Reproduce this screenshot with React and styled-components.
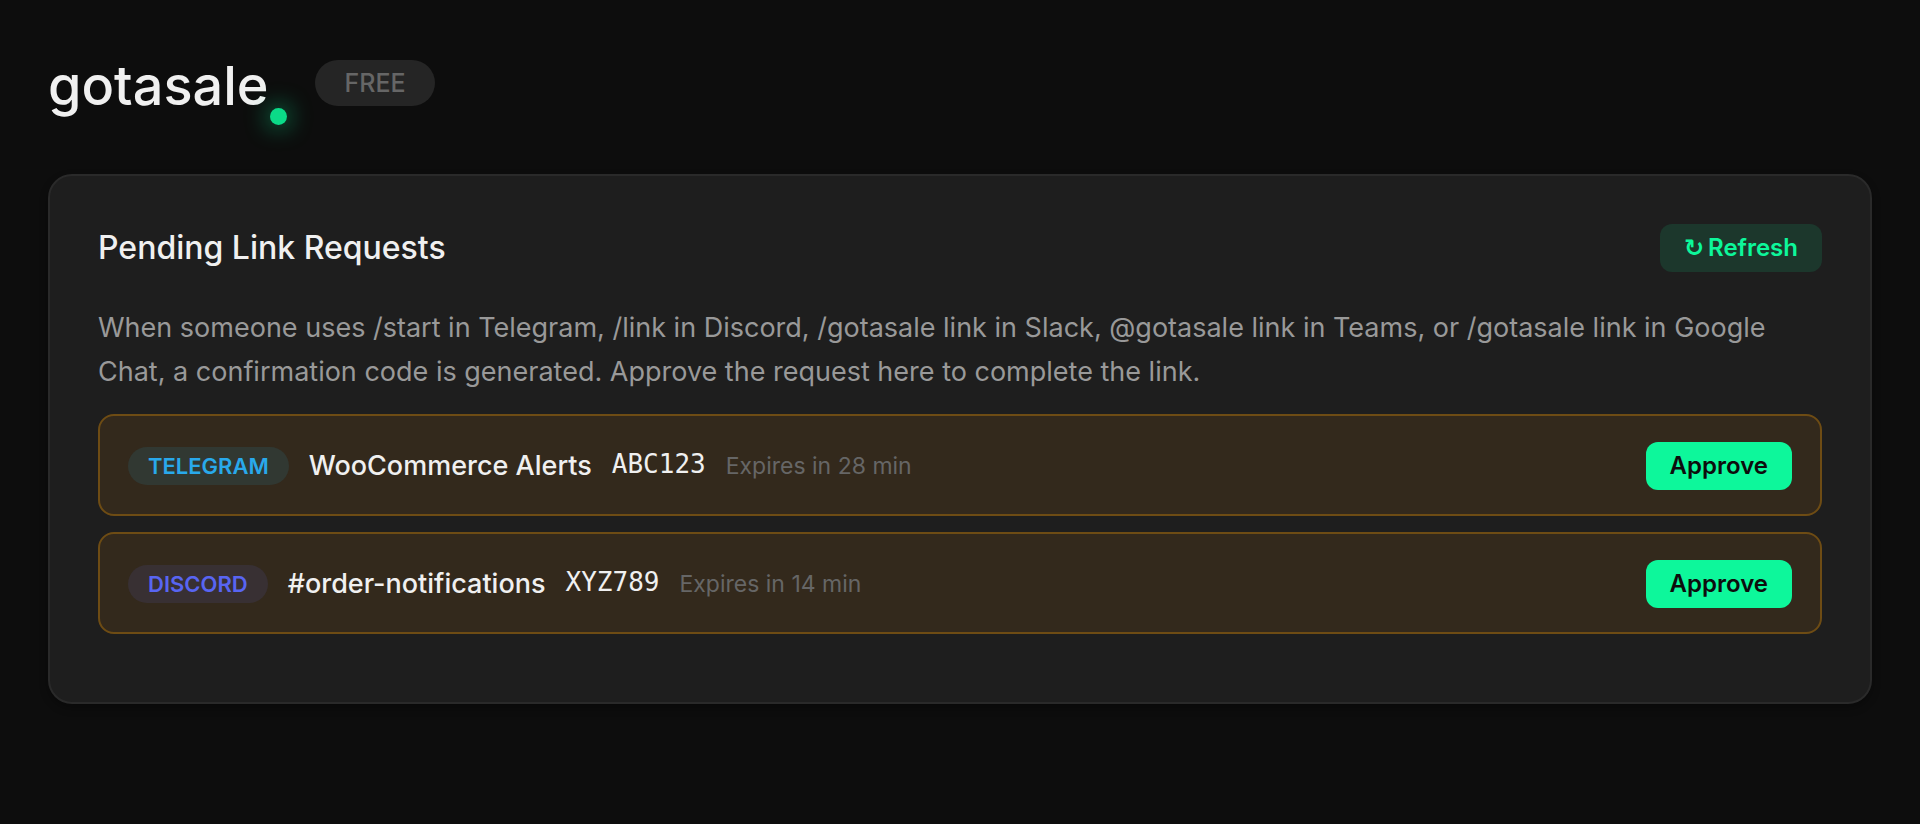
import React, { useState } from 'react';
import styled, { createGlobalStyle } from 'styled-components';

const GlobalStyle = createGlobalStyle`
  * {
    box-sizing: border-box;
  }

  body {
    margin: 0;
    background: #0d0d0d;
    color: #f0f0f0;
    font-family: Inter, 'DejaVu Sans', sans-serif;
  }
`

const Page = styled.main`
  padding: 48px;
`

const Header = styled.header`
  display: flex;
  align-items: flex-start;
  gap: 28px;

  height: 126px;
  padding-top: 4px;
`

const Logo = styled.h1`
  display: flex;
  align-items: flex-start;
  gap: 2px;

  height: 73px;
  margin: 0;

  font-size: 54px;
  line-height: 68px;
  font-weight: 500;
`

const Dot = styled.span`
  align-self: flex-end;

  width: 17px;
  height: 17px;

  border-radius: 50%;

  background: #0bda88;
  box-shadow: 0 0 24px rgba(13, 247, 155, 0.8);
`

const Plan = styled.span`
  margin-top: 8px;
  padding: 0 29px;

  border-radius: 23px;

  background: #252525;
  color: #666666;

  font-size: 25px;
  line-height: 46px;
  font-weight: 500;
`

const Card = styled.section`
  padding: 48px 48px 68px;

  border: 2px solid #2a2a2a;
  border-radius: 24px;

  background: #1e1e1e;
  box-shadow: 0 4px 8px rgba(0, 0, 0, 0.3);
`

const CardHeader = styled.div`
  display: flex;
  justify-content: space-between;
  align-items: center;

  margin-bottom: 34px;
`

const Title = styled.h2`
  margin: 0;

  font-size: 32px;
  line-height: 48px;
  font-weight: 500;
`

const Btn = styled.button`
  display: flex;
  align-items: center;
  gap: 4px;

  height: 48px;
  padding: 0 24px;

  border: 0;
  border-radius: 12px;

  background: ${props => props.$primary ? "#0df79b" : "#1c372c"};
  color: ${props => props.$primary ? "#0d0d0d" : "#0df79b"};

  font-family: inherit;
  font-size: 24px;
  line-height: 30px;
  font-weight: 600;

  cursor: pointer;
`

const Arrow = styled.span`
  font-family: 'DejaVu Sans', sans-serif;
`

const Description = styled.p`
  margin: 0 0 20px;

  color: #999999;

  font-size: 27px;
  line-height: 44px;
`

const RequestList = styled.ul`
  display: flex;
  flex-direction: column;
  gap: 16px;

  margin: 0;
  padding: 0;

  list-style: none;
`

const Request = styled.li`
  display: flex;
  align-items: center;
  gap: 20px;

  padding: 26px 28px 24px;

  border: 2px solid #6e4c14;
  border-radius: 16px;

  background: #33291c;
`

const Platform = styled.span`
  padding: 0 20px;

  border-radius: 19px;

  background: ${props => props.$background};
  color: ${props => props.$color};

  font-size: 22px;
  line-height: 38px;
  font-weight: 600;
`

const Name = styled.span`
  font-size: 27px;
  line-height: 40px;
  font-weight: 500;
`

const Code = styled.code`
  padding-bottom: 4px;

  font-family: 'DejaVu Sans Mono', monospace;
  font-size: 26px;
  line-height: 40px;
`

const Expires = styled.span`
  flex: 1;

  color: #666666;

  font-size: 23px;
  line-height: 40px;
`

const platforms = {
  telegram: { label: 'TELEGRAM', color: '#29a9eb', background: '#313832' },
  discord: { label: 'DISCORD', color: '#5865f2', background: '#383033' },
}

const pending = [
  { platform: 'telegram', name: 'WooCommerce Alerts', code: 'ABC123', minutes: 28 },
  { platform: 'discord', name: '#order-notifications', code: 'XYZ789', minutes: 14 },
]

function PendingRequest({ request, onApprove }) {
  const platform = platforms[request.platform]

  return (
    <Request>
      <Platform $color={platform.color} $background={platform.background}>{platform.label}</Platform>
      <Name>{request.name}</Name>
      <Code>{request.code}</Code>
      <Expires>Expires in {request.minutes} min</Expires>
      <Btn type="button" $primary onClick={() => onApprove(request.code)}>Approve</Btn>
    </Request>
  )
}

function App() {
  const [requests, setRequests] = useState(pending)

  const approve = (code) => setRequests(requests.filter(r => r.code !== code))

  return (
    <Page>
      <GlobalStyle />
      <Header>
        <Logo>gotasale<Dot /></Logo>
        <Plan>FREE</Plan>
      </Header>
      <Card>
        <CardHeader>
          <Title>Pending Link Requests</Title>
          <Btn type="button" onClick={() => setRequests(pending)}><Arrow>↻</Arrow> Refresh</Btn>
        </CardHeader>
        <Description>
          When someone uses /start in Telegram, /link in Discord, /gotasale link in Slack, @gotasale link in Teams, or /gotasale link in Google Chat, a confirmation code is generated. Approve the request here to complete the link.
        </Description>
        <RequestList>
          {requests.map(r => <PendingRequest key={r.code} request={r} onApprove={approve} />)}
        </RequestList>
      </Card>
    </Page>
  )
}

export default App;
